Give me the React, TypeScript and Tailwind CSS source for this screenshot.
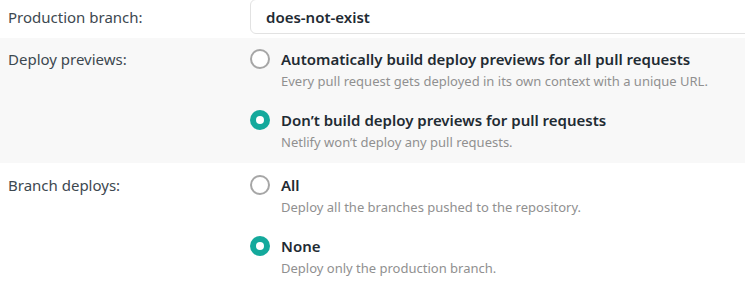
import React from 'react';

type Option = {
  title: string;
  description: string;
  checked: boolean;
};

const previewOptions: Option[] = [
  {
    title: 'Automatically build deploy previews for all pull requests',
    description:
      'Every pull request gets deployed in its own context with a unique URL.',
    checked: false
  },
  {
    title: 'Don\u2019t build deploy previews for pull requests',
    description: 'Netlify won\u2019t deploy any pull requests.',
    checked: true
  }
];

const branchOptions: Option[] = [
  {
    title: 'All',
    description: 'Deploy all the branches pushed to the repository.',
    checked: false
  },
  {
    title: 'None',
    description: 'Deploy only the production branch.',
    checked: true
  }
];

function Radio({ checked }: { checked: boolean }) {
  if (checked) {
    return (
      <span className="mt-px flex h-5 w-5 shrink-0 items-center justify-center rounded-full bg-[#14a99c]">
        <span className="h-2 w-2 rounded-full bg-white" />
      </span>
    );
  }
  return (
    <span className="mt-px h-5 w-5 shrink-0 rounded-full border-2 border-[#a6a6a6] bg-white" />
  );
}

function OptionList({ options }: { options: Option[] }) {
  return (
    <div className="flex flex-col gap-[17px]">
      {options.map((opt, i) => (
        <label key={i} className="flex items-start gap-[11px]">
          <Radio checked={opt.checked} />
          <div>
            <div className="text-[15px] leading-[22px] font-semibold text-[#1f2b33]">
              {opt.title}
            </div>
            <div className="text-[13px] leading-[22px] text-[#909090]">
              {opt.description}
            </div>
          </div>
        </label>
      ))}
    </div>
  );
}

export default function App() {
  return (
    <div className="h-[290px] w-[745px] overflow-hidden bg-white font-['Noto_Sans',sans-serif]">
      {/* Production branch */}
      <div className="flex h-[38px] items-start">
        <div className="w-[250px] shrink-0 pl-2 text-[15px] leading-[34px] text-[#3d4850]">
          Production branch:
        </div>
        <div className="-mt-px -mr-4 h-[35px] flex-1 rounded-md border border-[#e2e2e2] bg-white pl-[15px] text-[15px] leading-[34px] font-semibold text-[#1f2b33]">
          does-not-exist
        </div>
      </div>

      {/* Deploy previews */}
      <div className="flex bg-[#f8f8f8] pt-[10px] pb-[10px]">
        <div className="w-[250px] shrink-0 pl-2 text-[15px] leading-[22px] text-[#3d4850]">
          Deploy previews:
        </div>
        <OptionList options={previewOptions} />
      </div>

      {/* Branch deploys */}
      <div className="flex pt-[11px]">
        <div className="w-[250px] shrink-0 pl-2 text-[15px] leading-[22px] text-[#3d4850]">
          Branch deploys:
        </div>
        <OptionList options={branchOptions} />
      </div>
    </div>
  );
}
